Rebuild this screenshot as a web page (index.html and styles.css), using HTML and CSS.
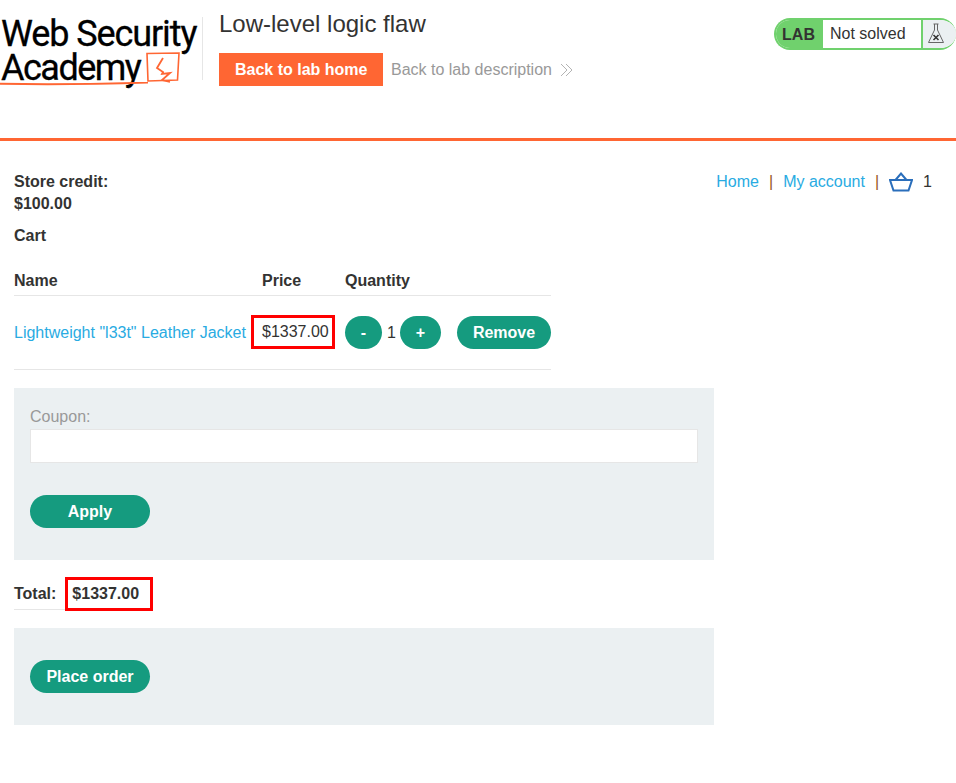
FILE: index.html
```html
<!DOCTYPE html>
<html lang="en">
<head>
<meta charset="utf-8">
<title>Low-level logic flaw</title>
<link rel="stylesheet" href="styles.css">
</head>
<body>
<header class="lab-header">
  <div class="logo">
    <div class="logo-text">Web Security<br><span class="logo-second">Academy</span></div>
    <svg class="logo-mark" width="36" height="36" viewBox="0 0 36 36" fill="none" stroke="#ff6633" stroke-width="1.600">
      <path d="M1 1.500 L33 1 L31.500 28 L2 29 L1 1.500 Z"/>
      <path d="M17 6 L11 16 L17 20 L16 22 L24 21 L16 28 L24 30" stroke-width="1.800"/>
    </svg>
    <svg class="logo-line" width="148" height="4" viewBox="0 0 148 4"><path d="M0 1.800 Q70 3 148 0.600" stroke="#ff6633" stroke-width="2" fill="none"/></svg>
  </div>
  <div class="lab-info">
    <h2 class="lab-title">Low-level logic flaw</h2>
    <div class="lab-links">
      <a class="btn-home" href="#">Back to lab home</a>
      <a class="link-desc" href="#">Back to lab description
        <svg width="13" height="14" viewBox="0 0 13 14" fill="none" stroke="#b3b3b3" stroke-width="1"><path d="M1 1 L7 7 L1 13 M6 1 L12 7 L6 13"/></svg>
      </a>
    </div>
  </div>
  <div class="status">
    <span class="status-lab">LAB</span>
    <span class="status-text">Not solved</span>
    <span class="status-icon">
      <svg width="18" height="24" viewBox="0 0 18 24" fill="none" stroke="#666" stroke-width="1"><path d="M6.500 2 H11.500 M7.500 2 V8 L1.500 20.500 H16.500 L10.500 8 V2"/><path d="M6.500 13 L11.500 18 M11.500 13 L6.500 18" stroke="#333" stroke-width="1.600"/></svg>
    </span>
  </div>
</header>
<main class="page">
  <div class="top-row">
    <div class="credit"><strong>Store credit:<br>$100.00</strong></div>
    <nav class="nav">
      <a href="#">Home</a><span class="sep">|</span><a href="#">My account</a><span class="sep">|</span>
      <svg class="basket" width="24" height="20" viewBox="0 0 24 20" fill="none" stroke="#2a6ebb" stroke-width="2"><path d="M1 8 H23 L19.500 18.500 H4.500 Z M6.500 8 L12 1.500 L17.500 8"/></svg>
      <span class="count">1</span>
    </nav>
  </div>
  <p class="cart-title"><strong>Cart</strong></p>
  <table class="cart">
    <thead>
      <tr><th class="col-name">Name</th><th class="col-price">Price</th><th class="col-qty">Quantity</th><th class="col-rm"></th></tr>
    </thead>
    <tbody>
      <tr>
        <td><a class="item-link" href="#">Lightweight "l33t" Leather Jacket</a></td>
        <td class="boxed-cell"><span class="boxed">$1337.00</span></td>
        <td><div class="qty"><button class="btn btn-minus">-</button><span class="qty-num">1</span><button class="btn btn-plus">+</button></div></td>
        <td class="rm"><button class="btn btn-remove">Remove</button></td>
      </tr>
    </tbody>
  </table>
  <form class="panel panel-coupon">
    <label class="coupon-label">Coupon:</label>
    <input class="coupon-input" type="text">
    <button class="btn btn-wide" type="button">Apply</button>
  </form>
  <div class="total">
    <strong class="total-label">Total:</strong><strong class="boxed total-box">$1337.00</strong>
  </div>
  <div class="panel panel-order">
    <button class="btn btn-wide" type="button">Place order</button>
  </div>
</main>
</body>
</html>
```
FILE: styles.css
```css
* { box-sizing: border-box; }
html, body { margin: 0; padding: 0; background: #fff; }
body { font-family: "Liberation Sans", Arial, sans-serif; font-size: 16px; color: #333332; line-height: 22px; }
a { color: #29abe2; text-decoration: none; }

.lab-header { height: 141px; border-bottom: 3px solid #ff6633; display: flex; align-items: flex-start; position: relative; }
.logo { width: 203px; height: 63px; margin-top: 17px; border-right: 1px solid #e6e6e6; position: relative; flex: none; }
.logo-text { font-family: "Roboto", "Liberation Sans", sans-serif; font-weight: 400; font-size: 36px; line-height: 34px; letter-spacing: -1.100px; -webkit-text-stroke: 0.3px #000; color: #000; margin-left: 1px; white-space: nowrap; }
.logo-second { letter-spacing: -1.500px; }
.logo-mark { position: absolute; left: 146px; top: 35px; }
.logo-line { position: absolute; left: 0; top: 65px; }

.lab-info { margin-left: 16px; padding-top: 10px; flex: none; }
.lab-title { margin: 0; font-weight: 400; font-size: 24px; line-height: 27px; color: #333332; }
.lab-links { display: flex; align-items: center; margin-top: 16px; }
.btn-home { background: #ff6633; color: #fff; font-weight: 700; height: 33px; line-height: 33px; padding: 0 16px; }
.link-desc { color: #999; margin-left: 8px; display: flex; align-items: center; gap: 8px; position: relative; left: -0.500px; }

.status { margin-left: auto; margin-top: 18px; height: 32px; width: 182px; flex: none; display: flex; border: 2px solid #70d16d; border-right: 0; border-radius: 16px; overflow: hidden; }
.status-lab { background: #70d16d; font-weight: 700; width: 47px; text-align: center; line-height: 30px; padding-right: 2px; }
.status-text { flex: 1; text-align: left; padding-left: 7px; line-height: 28px; }
.status-icon { width: 35px; background: #ebf0f2; border-left: 2px solid #70d16d; display: flex; align-items: center; padding-left: 4px; flex: none; }

.page { padding: 0 14px; }
.top-row { display: flex; justify-content: space-between; padding-top: 30px; }
.nav { display: flex; align-items: center; height: 22px; padding-right: 10px; }
.sep { color: #96591c; margin: 0 10px; }
.count { margin-left: 10px; }
.cart-title { margin: 10px 0 0; }

.cart { border-collapse: collapse; margin-top: 20px; }
.cart th { text-align: left; font-weight: 700; padding: 0; height: 28px; border-bottom: 1px solid #e6e6e6; vertical-align: middle; }
.cart td { padding: 0; height: 74px; border-bottom: 1px solid #e6e6e6; vertical-align: middle; }
.col-name { width: 237px; }
.col-price { width: 94px; padding-left: 11px !important; }
.col-qty { width: 112px; }
.col-rm { width: 94px; }
.item-link { position: relative; top: 1px; }
.boxed { border: 3px solid #f00; display: inline-block; }
.boxed-cell .boxed { height: 34px; line-height: 28px; padding: 0 3px 0 8px; }
.qty { display: flex; align-items: center; white-space: nowrap; }
.qty-num { margin: 0 5px; padding-top: 1px; width: 8px; }
.btn { background: #159b7f; color: #fff; font: 700 16px/22px "Liberation Sans", Arial, sans-serif; border: 0; border-radius: 25px; padding: 2px 0 0; height: 33px; vertical-align: middle; }
.btn-minus { width: 37px; }
.btn-plus { width: 41px; }
.btn-remove { width: 94px; }
.btn-wide { width: 120px; display: block; }

.panel { background: #ebf0f2; width: 700px; padding: 0 16px; }
.panel-coupon { margin-top: 18px; height: 172px; padding-top: 18px; }
.coupon-label { display: block; color: #999; line-height: 22px; }
.coupon-input { display: block; width: 668px; height: 34px; margin-top: 1px; background: #fff; border: 1px solid #e6e6e6; }
.panel-coupon .btn-wide { margin-top: 32px; }
.total { margin-top: 17px; display: flex; align-items: center; height: 33px; width: 137px; border-bottom: 1px solid #e6e6e6; }
.total-label { margin-right: 9px; padding-top: 3px; }
.total-box { height: 34px; line-height: 28px; width: 88px; padding-left: 4px; flex: none; align-self: flex-start; }
.panel-order { margin-top: 18px; height: 97px; padding-top: 32px; }
```
